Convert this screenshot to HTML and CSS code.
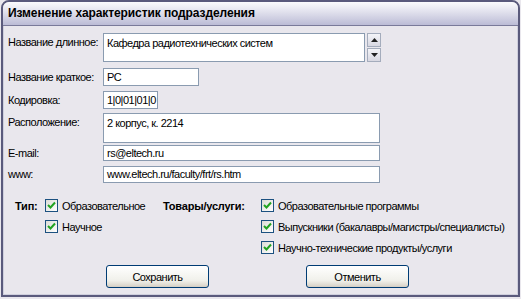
FILE: index.html
```html
<!DOCTYPE html>
<html lang="ru">
<head>
<meta charset="utf-8">
<link rel="stylesheet" href="styles.css">
</head>
<body>
<div class="window">
  <div class="titlebar">Изменение характеристик подразделения</div>
  <div class="content">
    <div class="row r1">
      <div class="label">Название длинное:</div>
      <div class="field long">Кафедра радиотехнических систем</div>
      <div class="spin">
        <div class="spinbtn"><svg width="7" height="4" viewBox="0 0 7 4"><path d="M0 4 L3.5 0 L7 4 Z" fill="#222"/></svg></div>
        <div class="spinbtn"><svg width="7" height="4" viewBox="0 0 7 4"><path d="M0 0 L3.5 4 L7 0 Z" fill="#222"/></svg></div>
      </div>
    </div>
    <div class="row r2">
      <div class="label mid">Название краткое:</div>
      <div class="field short mid">РС</div>
    </div>
    <div class="row r3">
      <div class="label mid">Кодировка:</div>
      <div class="field code mid">1|0|01|01|0</div>
    </div>
    <div class="row r4">
      <div class="label">Расположение:</div>
      <div class="field wide">2 корпус, к. 2214</div>
    </div>
    <div class="row r5">
      <div class="label mid">E-mail:</div>
      <div class="field wide mid">rs@eltech.ru</div>
    </div>
    <div class="row r6">
      <div class="label mid">www:</div>
      <div class="field wide mid">www.eltech.ru/faculty/frt/rs.htm</div>
    </div>

    <div class="checks">
      <div class="glabel g1">Тип:</div>
      <div class="col c1">
        <label class="cb"><span class="box"><svg width="9" height="9" viewBox="0 0 9 9"><path d="M1 4 L3.5 6.5 L8 1.5" fill="none" stroke="#22a322" stroke-width="2"/></svg></span>Образовательное</label>
        <label class="cb"><span class="box"><svg width="9" height="9" viewBox="0 0 9 9"><path d="M1 4 L3.5 6.5 L8 1.5" fill="none" stroke="#22a322" stroke-width="2"/></svg></span>Научное</label>
      </div>
      <div class="glabel g2">Товары/услуги:</div>
      <div class="col c2">
        <label class="cb"><span class="box"><svg width="9" height="9" viewBox="0 0 9 9"><path d="M1 4 L3.5 6.5 L8 1.5" fill="none" stroke="#22a322" stroke-width="2"/></svg></span>Образовательные программы</label>
        <label class="cb"><span class="box"><svg width="9" height="9" viewBox="0 0 9 9"><path d="M1 4 L3.5 6.5 L8 1.5" fill="none" stroke="#22a322" stroke-width="2"/></svg></span>Выпускники (бакалавры/магистры/специалисты)</label>
        <label class="cb"><span class="box"><svg width="9" height="9" viewBox="0 0 9 9"><path d="M1 4 L3.5 6.5 L8 1.5" fill="none" stroke="#22a322" stroke-width="2"/></svg></span>Научно-технические продукты/услуги</label>
      </div>
    </div>

    <div class="buttons">
      <div class="btn">Сохранить</div>
      <div class="btn">Отменить</div>
    </div>
  </div>
</div>
</body>
</html>
```
FILE: styles.css
```css
html, body {
  margin: 0;
  padding: 0;
  background: #e9e7ed;
}
body {
  width: 521px;
  height: 299px;
  overflow: hidden;
  font-family: "Liberation Sans", Arial, sans-serif;
  font-size: 11px;
  letter-spacing: -0.5px;
  color: #000;
}
.window {
  box-sizing: border-box;
  width: 519px;
  height: 297px;
  margin: 0 0 0 1px;
  border: 2px solid #5a5a7c;
  border-radius: 8px 8px 0 0;
  box-shadow: inset 0 0 0 1px #cfcfdd;
  background: #e9e7ed;
  overflow: hidden;
}
.titlebar {
  box-sizing: border-box;
  height: 24px;
  padding: 4px 0 0 5px;
  font-size: 12px;
  letter-spacing: -0.1px;
  font-weight: bold;
  background: linear-gradient(#fbfbfd 0%, #e6e6f0 35%, #bcbcd6 100%);
  border-bottom: 1px solid #7a7a9a;
}
.content {
  display: flex;
  flex-direction: column;
  padding: 7px 0 0 5px;
}
.row {
  display: flex;
  align-items: flex-start;
}
.r1 { height: 29px; }
.r2 { height: 18px; margin-top: 6px; }
.r3 { height: 18px; margin-top: 5px; }
.r4 { height: 30px; margin-top: 4px; }
.r5 { height: 16px; margin-top: 2px; }
.r6 { height: 17px; margin-top: 5px; }
.label {
  width: 95px;
  padding-top: 3px;
  line-height: 13px;
  white-space: nowrap;
}
.label.mid { align-self: center; padding-top: 0; }
.field {
  box-sizing: border-box;
  height: 100%;
  background: #fff;
  border: 1px solid #8a9bb0;
  padding: 3px 3px 0 3px;
  line-height: 13px;
  white-space: nowrap;
  overflow: hidden;
}
.field.mid {
  display: flex;
  align-items: center;
  padding-top: 0;
}
.long { width: 262px; }
.short { width: 96px; }
.code { width: 55px; }
.wide { width: 277px; }
.spin {
  display: flex;
  flex-direction: column;
  gap: 1px;
  margin-left: 2px;
}
.spinbtn {
  box-sizing: border-box;
  width: 14px;
  height: 14px;
  border: 1px solid #a4acbc;
  background: linear-gradient(#f4f4f8, #d8d8e2);
  display: flex;
  align-items: center;
  justify-content: center;
}
.checks {
  display: grid;
  grid-template-columns: 30px 118px 98px auto;
  margin-top: 16px;
  padding-left: 7px;
}
.glabel {
  font-weight: bold;
  line-height: 13px;
  padding-top: 1px;
  white-space: nowrap;
  letter-spacing: -0.2px;
}
.col {
  display: flex;
  flex-direction: column;
  gap: 8px;
}
.cb {
  display: flex;
  align-items: center;
  gap: 4px;
  height: 13px;
  white-space: nowrap;
}
.box {
  box-sizing: border-box;
  width: 13px;
  height: 13px;
  border: 1px solid #1c5180;
  background: linear-gradient(135deg, #dcdcd6, #ffffff);
  display: flex;
  align-items: center;
  justify-content: center;
  flex: none;
}
.buttons {
  display: flex;
  gap: 97px;
  margin-top: 11px;
  padding-left: 98px;
}
.btn {
  box-sizing: border-box;
  width: 103px;
  height: 23px;
  border: 1px solid #003c74;
  border-radius: 3px;
  background: linear-gradient(#ffffff, #f0f0ea 70%, #d6d0c5);
  box-shadow: inset 0 -1px 0 #d6d0c5;
  display: flex;
  align-items: center;
  justify-content: center;
}
```
